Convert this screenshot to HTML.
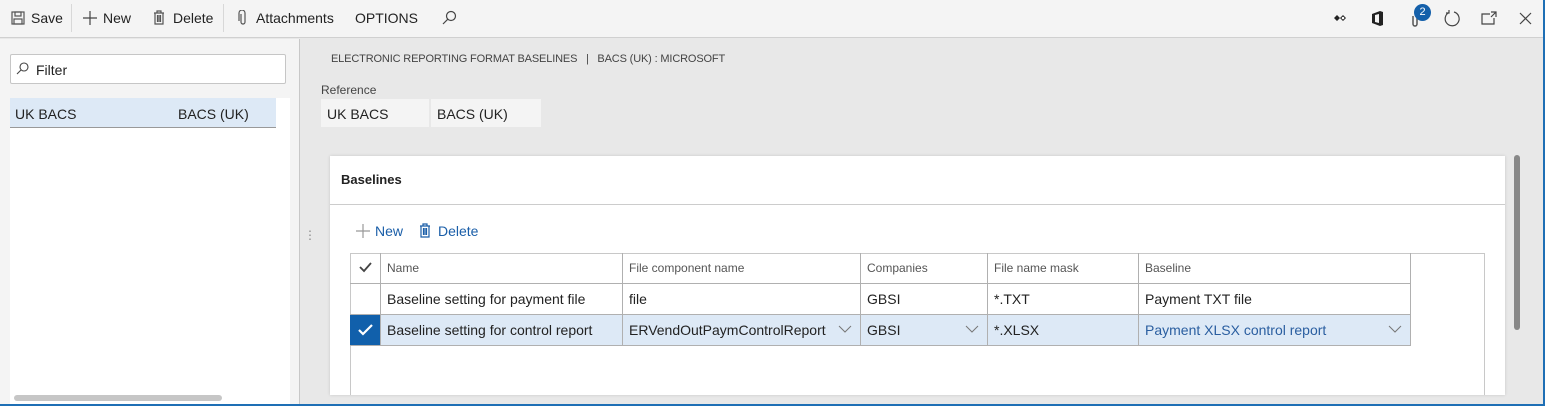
<!DOCTYPE html>
<html><head><style>
*{box-sizing:border-box;margin:0;padding:0}
body{width:1545px;height:406px;overflow:hidden;font-family:"Liberation Sans",sans-serif;font-size:14px;color:#222;background:#e8e8e8;position:relative}
.abs{position:absolute}
.tb{left:0;top:0;width:1545px;height:38px;background:#f4f4f4;border-bottom:1px solid #d0d0d0}
.tb span{position:absolute;top:10px;font-size:14px;color:#222}
.left{left:0;top:39px;width:300px;height:367px;background:#f4f4f4;border-right:1px solid #c8c8c8}
.cell{position:absolute;border-right:1px solid #b0b0b0;border-bottom:1px solid #b0b0b0;height:31px;padding:0 6px;line-height:30px;white-space:nowrap}
.h{font-size:12px;color:#555}
.chev{position:absolute;right:8px;top:6px}
</style></head><body>
<div class="abs tb">
<svg class="abs" style="left:11px;top:11px" width="14" height="14" viewBox="0 0 14 14" fill="none" stroke="#555" stroke-width="1.2"><rect x="1" y="1" width="12" height="12"/><rect x="4" y="1" width="6" height="4"/><rect x="3" y="8" width="8" height="5"/></svg>
<span style="left:31px">Save</span>
<div class="abs" style="left:71px;top:4px;width:1px;height:28px;background:#d8d8d8"></div>
<svg class="abs" style="left:82px;top:10px" width="16" height="16" stroke="#444" stroke-width="1.2"><path d="M8 1V15M1 8H15"/></svg>
<span style="left:103px">New</span>
<svg class="abs" style="left:153px;top:10px" width="12" height="15" fill="none" stroke="#555" stroke-width="1.2"><path d="M1 3H11M4 3V1H8V3M2 3V14H10V3M4.5 5V12M6 5V12M7.5 5V12"/></svg>
<span style="left:173px">Delete</span>
<div class="abs" style="left:223px;top:4px;width:1px;height:28px;background:#d8d8d8"></div>
<svg class="abs" style="left:238px;top:10px" width="10" height="16" fill="none" stroke="#555" stroke-width="1.2"><path d="M3 4V12A2 2 0 0 0 7 12V3A3 3 0 0 0 1 3V11"/></svg>
<span style="left:256px">Attachments</span>
<span style="left:355px">OPTIONS</span>
<svg class="abs" style="left:442px;top:10px" width="15" height="15" fill="none" stroke="#444" stroke-width="1.2"><circle cx="9" cy="6" r="4.5"/><path d="M5.8 9.2L1 14"/></svg>
<svg class="abs" style="left:1334px;top:14px" width="12" height="8"><path d="M0 4L3 1L6 4L3 7Z M6 4L9 1L12 4L9 7Z" fill="#222"/><circle cx="9" cy="4" r="1.3" fill="#fff"/></svg>
<svg class="abs" style="left:1371px;top:11px" width="13" height="15"><path d="M1 3L9 0L12 1V14L9 15L1 12Z" fill="#222"/><path d="M4 4L8 3V12L4 11Z" fill="#f4f4f4"/></svg>
<svg class="abs" style="left:1410px;top:12px" width="10" height="16" fill="none" stroke="#555" stroke-width="1.5"><path d="M3 4V12A2 2 0 0 0 7 12V3"/></svg>
<div class="abs" style="left:1414px;top:4px;width:17px;height:17px;border-radius:50%;background:#1460aa;color:#fff;font-size:11px;text-align:center;line-height:17px">2</div>
<svg class="abs" style="left:1443px;top:10px" width="18" height="18" fill="none" stroke="#444" stroke-width="1.2"><path d="M6 2.5A7 7 0 1 0 11 2"/><path d="M6 0V3H3"/></svg>
<svg class="abs" style="left:1481px;top:11px" width="16" height="14" fill="none" stroke="#444" stroke-width="1.2"><path d="M9 3H1V13H13V7M10 1H15V6M15 1L10 6"/></svg>
<svg class="abs" style="left:1519px;top:12px" width="13" height="13" stroke="#444" stroke-width="1.2"><path d="M1 1L12 12M12 1L1 12"/></svg>
</div>
<div class="abs left">
<div class="abs" style="left:10px;top:15px;width:276px;height:30px;background:#fff;border:1px solid #c6c6c6;border-radius:2px"></div>
<svg class="abs" style="left:16px;top:23px" width="13" height="13" fill="none" stroke="#444" stroke-width="1.1"><circle cx="8" cy="5" r="4"/><path d="M5 8L1 12"/></svg>
<span class="abs" style="left:36px;top:23px">Filter</span>
<div class="abs" style="left:10px;top:59px;width:280px;height:308px;background:#fff"></div>
<div class="abs" style="left:10px;top:59px;width:266px;height:30px;background:#dde9f6;border-bottom:1px solid #999"></div>
<span class="abs" style="left:15px;top:67px">UK BACS</span>
<span class="abs" style="left:178px;top:67px">BACS (UK)</span>
<div class="abs" style="left:14px;top:356px;width:208px;height:6px;border-radius:3px;background:#c6c6c6"></div>
</div>
<span class="abs" style="left:304px;top:228px;color:#888;font-size:12px">⋮</span>
<span class="abs" style="left:331px;top:53px;font-size:11px;letter-spacing:-0.15px;color:#444">ELECTRONIC REPORTING FORMAT BASELINES &nbsp;&nbsp;|&nbsp;&nbsp; BACS (UK) : MICROSOFT</span>
<span class="abs" style="left:321px;top:83px;font-size:12px;color:#444">Reference</span>
<div class="abs" style="left:321px;top:99px;width:220px;height:28px;background:#f4f4f4;border-left:0"></div>
<div class="abs" style="left:429px;top:99px;width:2px;height:28px;background:#e8e8e8"></div>
<span class="abs" style="left:327px;top:106px">UK BACS</span>
<span class="abs" style="left:437px;top:106px">BACS (UK)</span>
<div class="abs" style="left:330px;top:156px;width:1175px;height:239px;background:#fff;box-shadow:0 0 3px rgba(0,0,0,.15)"></div>
<span class="abs" style="left:341px;top:172px;font-weight:bold;font-size:13px">Baselines</span>
<div class="abs" style="left:330px;top:204px;width:1175px;height:1px;background:#ccc"></div>
<svg class="abs" style="left:356px;top:224px" width="14" height="14" stroke="#999" stroke-width="1.2"><path d="M7 0V14M0 7H14"/></svg>
<span class="abs" style="left:375px;top:223px;color:#1a5ea8">New</span>
<svg class="abs" style="left:419px;top:223px" width="12" height="15" fill="none" stroke="#1a5ea8" stroke-width="1.2"><path d="M1 3H11M4 3V1H8V3M2 3V14H10V3M4.5 5V12M6 5V12M7.5 5V12"/></svg>
<span class="abs" style="left:438px;top:223px;color:#1a5ea8">Delete</span>
<div class="abs" style="left:350px;top:253px;width:1135px;height:142px;border:1px solid #c8c8c8;border-bottom:0"></div>
<div class="cell h" style="left:350px;top:253px;width:31px;border-left:0;border-top:0"></div>
<svg class="abs" style="left:359px;top:262px" width="13" height="11" fill="none" stroke="#444" stroke-width="1.8"><path d="M1 5L5 9L12 1"/></svg>
<div class="cell h" style="left:381px;top:253px;width:242px">Name</div>
<div class="cell h" style="left:623px;top:253px;width:238px">File component name</div>
<div class="cell h" style="left:861px;top:253px;width:127px">Companies</div>
<div class="cell h" style="left:988px;top:253px;width:151px">File name mask</div>
<div class="cell h" style="left:1139px;top:253px;width:272px">Baseline</div>
<div class="cell" style="left:350px;top:284px;width:31px"></div>
<div class="cell" style="left:381px;top:284px;width:242px">Baseline setting for payment file</div>
<div class="cell" style="left:623px;top:284px;width:238px">file</div>
<div class="cell" style="left:861px;top:284px;width:127px">GBSI</div>
<div class="cell" style="left:988px;top:284px;width:151px">*.TXT</div>
<div class="cell" style="left:1139px;top:284px;width:272px">Payment TXT file</div>
<div class="cell" style="left:350px;top:315px;width:31px;background:#1160ab"></div>
<svg class="abs" style="left:358px;top:324px" width="15" height="12" fill="none" stroke="#fff" stroke-width="2.2"><path d="M1 6L5 10L14 1"/></svg>
<div class="cell" style="left:381px;top:315px;width:242px;background:#dde9f6">Baseline setting for control report</div>
<div class="cell" style="left:623px;top:315px;width:238px;background:#dde9f6">ERVendOutPaymControlReport<svg class="chev" width="14" height="14" fill="none" stroke="#777"><path d="M1 5L7 11L13 5"/></svg></div>
<div class="cell" style="left:861px;top:315px;width:127px;background:#dde9f6">GBSI<svg class="chev" width="14" height="14" fill="none" stroke="#777"><path d="M1 5L7 11L13 5"/></svg></div>
<div class="cell" style="left:988px;top:315px;width:151px;background:#dde9f6">*.XLSX</div>
<div class="cell" style="left:1139px;top:315px;width:272px;background:#dde9f6;color:#2a5ea0">Payment XLSX control report<svg class="chev" width="14" height="14" fill="none" stroke="#777"><path d="M1 5L7 11L13 5"/></svg></div>
<div class="abs" style="left:1514px;top:155px;width:6px;height:175px;border-radius:3px;background:#888"></div>
<div class="abs" style="left:0;top:404px;width:1545px;height:2px;background:#1e6fb5"></div>
<div class="abs" style="left:1543px;top:0;width:2px;height:406px;background:#1e6fb5"></div>
</body></html>
